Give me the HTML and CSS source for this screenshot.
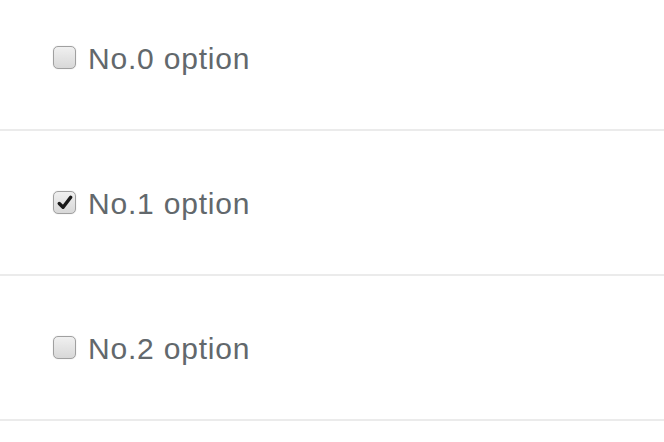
FILE: index.html
```html
<!DOCTYPE html>
<html>
<head>
<meta charset="utf-8">
<link rel="stylesheet" href="styles.css">
</head>
<body>
<ul class="list">
  <li class="row"><label class="opt"><span class="box"></span><span class="label">No.0 option</span></label></li>
  <li class="row"><label class="opt"><span class="box checked"><svg viewBox="0 0 22 22" width="22" height="22"><path d="M5.5 11.5 L9.5 15.5 L17.5 5" fill="none" stroke="#1a1a1a" stroke-width="3.6" stroke-linecap="round" stroke-linejoin="round"/></svg></span><span class="label">No.1 option</span></label></li>
  <li class="row"><label class="opt"><span class="box"></span><span class="label">No.2 option</span></label></li>
</ul>
</body>
</html>
```
FILE: styles.css
```css
html, body { margin: 0; padding: 0; background: #fff; }
.list { list-style: none; margin: -14px 0 0 0; padding: 0; }
.row {
  height: 143px;
  border-bottom: 2px solid #ebebeb;
  display: flex;
  align-items: center;
  padding-left: 53px;
}
.opt { display: flex; align-items: center; gap: 12px; }
.box {
  width: 21px; height: 21px;
  border: 1px solid #a0a0a0;
  border-radius: 5px;
  background: linear-gradient(#f0f0f0, #d8d8d8);
  box-shadow: 0 0 1px rgba(0,0,0,0.25);
  display: flex; align-items: center; justify-content: center;
  flex: none;
}
.box svg { display: block; }
.label {
  font-family: "Liberation Sans", Arial, sans-serif;
  font-size: 30px;
  letter-spacing: 0.8px;
  color: #62686c;
  line-height: 1;
  padding-top: 2px;
}
```
